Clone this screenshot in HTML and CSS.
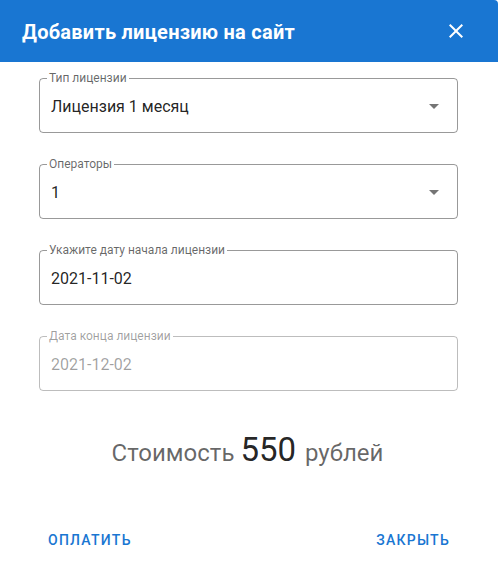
FILE: index.html
```html
<!DOCTYPE html>
<html lang="ru">
<head>
<meta charset="utf-8">
<link rel="stylesheet" href="styles.css">
</head>
<body>
<div class="dialog">
  <div class="header">
    <h2 class="title">Добавить лицензию на сайт</h2>
    <button class="close" aria-label="close">
      <svg viewBox="0 0 24 24" width="24" height="24"><path fill="#fff" d="M19 6.41 17.59 5 12 10.59 6.41 5 5 6.41 10.59 12 5 17.59 6.41 19 12 13.41 17.59 19 19 17.59 13.41 12z"/></svg>
    </button>
  </div>
  <div class="content">
    <div class="field">
      <fieldset class="outline"><legend>Тип лицензии</legend></fieldset>
      <div class="value">Лицензия 1 месяц</div>
      <svg class="arrow" viewBox="0 0 24 24" width="24" height="24"><path fill="rgba(0,0,0,0.54)" d="M7 10l5 5 5-5z"/></svg>
    </div>
    <div class="field">
      <fieldset class="outline"><legend>Операторы</legend></fieldset>
      <div class="value">1</div>
      <svg class="arrow" viewBox="0 0 24 24" width="24" height="24"><path fill="rgba(0,0,0,0.54)" d="M7 10l5 5 5-5z"/></svg>
    </div>
    <div class="field">
      <fieldset class="outline"><legend>Укажите дату начала лицензии</legend></fieldset>
      <div class="value">2021-11-02</div>
    </div>
    <div class="field disabled">
      <fieldset class="outline"><legend>Дата конца лицензии</legend></fieldset>
      <div class="value">2021-12-02</div>
    </div>
    <div class="cost">Стоимость <span class="sum">550</span> рублей</div>
  </div>
  <div class="actions">
    <button class="btn">Оплатить</button>
    <button class="btn">Закрыть</button>
  </div>
</div>
</body>
</html>
```
FILE: styles.css
```css
* { box-sizing: border-box; }
html, body { margin: 0; padding: 0; background: #fff; }
body { font-family: Roboto, "Noto Sans", sans-serif; width: 498px; height: 564px; overflow: hidden; }
.dialog { width: 498px; height: 564px; display: flex; flex-direction: column; background: #fff; }
.header {
  height: 62px; background: #1976d2; border-top-right-radius: 4px;
  display: flex; align-items: center; justify-content: space-between;
  padding: 0 30px 0 22px;
}
.title { margin: 0; color: #fff; font-size: 20px; font-weight: 700; letter-spacing: 0.25px; line-height: 1; padding-top: 2px; }
.close { border: 0; background: none; padding: 0; width: 24px; height: 24px; display: flex; cursor: pointer; }
.content { padding: 16px 40px 0 39px; display: flex; flex-direction: column; gap: 31px; }
.field { position: relative; height: 55px; display: flex; align-items: center; padding: 0 12px; }
.outline {
  position: absolute; inset: -7px 0 0 0; margin: 0; padding: 0 7px;
  border: 1px solid rgba(0,0,0,0.4); border-radius: 4px; pointer-events: none;
}
.outline legend {
  padding: 0 2px; font-size: 12px; line-height: 14px; color: rgba(0,0,0,0.6); letter-spacing: 0;
}
.value { font-size: 16px; color: rgba(0,0,0,0.87); letter-spacing: 0; padding-top: 1px; }
.arrow { position: absolute; right: 12px; top: 16px; }
.disabled .outline { border-color: rgba(0,0,0,0.26); }
.disabled .outline legend { color: rgba(0,0,0,0.38); }
.disabled .value { color: rgba(0,0,0,0.38); }
.cost { margin-top: 8px; text-align: center; font-size: 24px; color: rgba(0,0,0,0.6); line-height: 40px; padding-right: 2px; }
.sum { font-size: 33px; color: rgba(0,0,0,0.87); margin: 0 3px 0 0; }
.actions { margin-top: auto; height: 48px; display: flex; justify-content: space-between; align-items: center; padding: 0 40px 0 40px; }
.btn {
  border: 0; background: none; font-family: Roboto, sans-serif; font-size: 14px; font-weight: 500;
  letter-spacing: 1.25px; text-transform: uppercase; color: #1976d2; padding: 6px 8px; cursor: pointer;
}
```
